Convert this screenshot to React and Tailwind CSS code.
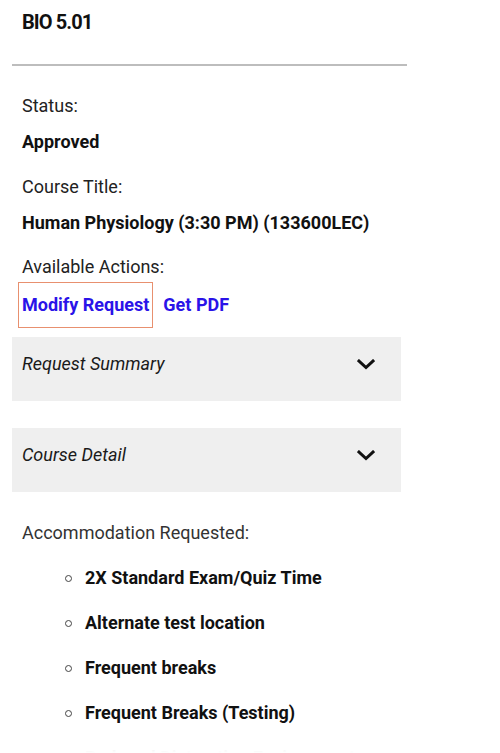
import React from 'react';

const Chevron = () => (
  <svg width="18" height="11" viewBox="0 0 18 11" fill="none">
    <polyline points="2,2 9,8.5 16,2" stroke="#111" strokeWidth="3" strokeLinecap="square" />
  </svg>
);

const Field = ({ label, value, first }) => (
  <div className={first ? '' : 'mt-[21px]'}>
    <div className="text-[#222]">{label}</div>
    <div className="mt-3 font-bold text-[#111]">{value}</div>
  </div>
);

const Panel = ({ title, className = '' }) => (
  <div className={`w-[389px] h-[64px] bg-[#efefef] pt-[15px] pl-[10px] pr-[26px] ${className}`}>
    <div className="flex items-center justify-between">
      <span className="italic text-[#1a1a1a]">{title}</span>
      <Chevron />
    </div>
  </div>
);

export default function App() {
  const items = [
    '2X Standard Exam/Quiz Time',
    'Alternate test location',
    'Frequent breaks',
    'Frequent Breaks (Testing)',
    'Reduced Distraction Environment',
  ];

  return (
    <div className="relative h-[753px] overflow-hidden bg-white font-[Roboto,sans-serif] text-[18px] leading-6 text-[#1a1a1a]">
      <div className="ml-3 w-[395px]">
        <h1 className="pt-[10px] pl-[10px] text-[20px] tracking-[-0.9px] font-bold text-[#111]">BIO 5.01</h1>
        <hr className="mt-[30px] border-0 border-t-2 border-[#bdbdbd]" />

        <div className="pl-[10px] pt-7">
          <Field first label="Status:" value="Approved" />
          <Field label="Course Title:" value="Human Physiology (3:30 PM) (133600LEC)" />
          <div className="mt-[20px] text-[#222]">Available Actions:</div>
          <div className="mt-[3px] -ml-1 flex items-center">
            <a className="border border-[#e8906f] px-[3px] py-[10px] font-bold text-[#2a13e8]">Modify Request</a>
            <a className="ml-[10px] font-bold text-[#2a13e8]">Get PDF</a>
          </div>
        </div>

        <Panel title="Request Summary" className="mt-[9px]" />
        <Panel title="Course Detail" className="mt-[27px]" />

        <div className="mt-[29px] pl-[10px] text-[#333]">Accommodation Requested:</div>
        <ul className="pl-[53px]">
          {items.map((item) => (
            <li key={item} className="mt-[21px] flex items-center gap-[13px] font-bold text-[#111]">
              <span className="w-[7px] h-[7px] rounded-full border-[1.5px] border-[#444] shrink-0" />
              {item}
            </li>
          ))}
        </ul>
      </div>

      {/* bottom fade */}
      <div className="pointer-events-none absolute bottom-0 left-0 right-0 h-[30px] bg-gradient-to-b from-white/0 via-white/80 to-white" />
    </div>
  );
}
